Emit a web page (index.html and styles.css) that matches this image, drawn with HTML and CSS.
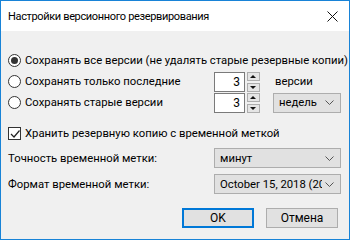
FILE: index.html
```html
<!DOCTYPE html>
<html lang="ru">
<head>
    <meta charset="UTF-8">
    <title>Настройки версионного резервирования</title>
    <link rel="stylesheet" href="styles.css">
</head>
<body>
    <div class="window">
        <div class="titlebar">
            <span class="title">Настройки версионного резервирования</span>
            <span class="close">
                <svg width="11" height="11" viewBox="0 0 11 11"><path d="M0.5 0.5 L10.5 10.5 M10.5 0.5 L0.5 10.5" stroke="#111" stroke-width="1"/></svg>
            </span>
        </div>

        <div class="content">
            <div class="options">
                <div class="row">
                    <span class="radio checked"></span>
                    <span>Сохранять все версии (не удалять старые резервные копии)</span>
                </div>
                <div class="row">
                    <span class="radio"></span>
                    <span class="label">Сохранять только последние</span>
                    <div class="spin">
                        <div class="spin-value">3</div>
                        <div class="spin-buttons">
                            <span class="arrow up"></span>
                            <span class="arrow down"></span>
                        </div>
                    </div>
                    <span class="unit">версии</span>
                </div>
                <div class="row">
                    <span class="radio"></span>
                    <span class="label">Сохранять старые версии</span>
                    <div class="spin">
                        <div class="spin-value">3</div>
                        <div class="spin-buttons">
                            <span class="arrow up"></span>
                            <span class="arrow down"></span>
                        </div>
                    </div>
                    <div class="combo small">
                        <span>недель</span>
                        <svg class="chevron" width="9" height="5" viewBox="0 0 9 5"><path d="M0.5 0.5 L4.5 4.5 L8.5 0.5" fill="none" stroke="#555" stroke-width="1"/></svg>
                    </div>
                </div>
            </div>

            <div class="row check-row">
                <span class="checkbox">
                    <svg width="10" height="10" viewBox="0 0 10 10"><path d="M1 5 L4 8 L9.5 1.5" fill="none" stroke="#222" stroke-width="1.2"/></svg>
                </span>
                <span>Хранить резервную копию с временной меткой</span>
            </div>

            <div class="field">
                <span class="label">Точность временной метки:</span>
                <div class="combo">
                    <span>минут</span>
                    <svg class="chevron" width="9" height="5" viewBox="0 0 9 5"><path d="M0.5 0.5 L4.5 4.5 L8.5 0.5" fill="none" stroke="#555" stroke-width="1"/></svg>
                </div>
            </div>
            <div class="field second">
                <span class="label">Формат временной метки:</span>
                <div class="combo">
                    <span class="clip">October 15, 2018 (2018-10-15)</span>
                    <svg class="chevron" width="9" height="5" viewBox="0 0 9 5"><path d="M0.5 0.5 L4.5 4.5 L8.5 0.5" fill="none" stroke="#555" stroke-width="1"/></svg>
                </div>
            </div>

            <div class="buttons">
                <button class="btn default">OK</button>
                <button class="btn">Отмена</button>
            </div>
        </div>
    </div>
</body>
</html>
```

FILE: styles.css
```css
* {
    box-sizing: border-box;
}

body {
    margin: 0;
    font-family: Roboto, "Noto Sans", sans-serif;
    font-size: 11.3px;
    color: #000;
    white-space: nowrap;
}

.window {
    width: 350px;
    height: 240px;
    border: 1px solid #1883d7;
    background-color: #f0f0f0;
    display: flex;
    flex-direction: column;
    overflow: hidden;
}

.titlebar {
    height: 30px;
    background-color: #fff;
    display: flex;
    align-items: center;
    justify-content: space-between;
    padding: 1px 11px 0 7px;
}

.title {
    font-size: 11px;
    letter-spacing: -0.35px;
}

.close {
    display: flex;
}

.content {
    flex: 1;
    padding: 19px 8px 0 7px;
}

.row {
    display: flex;
    align-items: center;
    height: 21px;
}

.radio {
    width: 13px;
    height: 13px;
    border: 1px solid #333;
    border-radius: 50%;
    background-color: #fff;
    margin-right: 4px;
    position: relative;
    flex-shrink: 0;
}

.radio.checked::after {
    content: "";
    position: absolute;
    left: 2px;
    top: 2px;
    width: 7px;
    height: 7px;
    border-radius: 50%;
    background-color: #333;
}

.label {
    width: 189px;
}

.field .label {
    width: 206px;
}

.spin {
    display: flex;
    align-items: center;
    margin-right: 13px;
}

.spin-value {
    width: 31px;
    height: 20px;
    border: 1px solid #7a7a7a;
    background-color: #fff;
    text-align: right;
    padding-right: 4px;
    line-height: 18px;
    font-size: 12px;
}

.spin-buttons {
    display: flex;
    flex-direction: column;
    justify-content: space-between;
    width: 13px;
    height: 20px;
    margin-left: 2px;
}

.arrow {
    height: 9px;
    background-color: #e5e5e5;
    border: 1px solid #adadad;
    position: relative;
}

.arrow::after {
    content: "";
    position: absolute;
    left: 2px;
    border-left: 3.5px solid transparent;
    border-right: 3.5px solid transparent;
}

.arrow.up::after {
    top: 2px;
    border-bottom: 3px solid #111;
}

.arrow.down::after {
    top: 2px;
    border-top: 3px solid #111;
}

.unit {
    margin-left: 2px;
}

.combo {
    width: 127px;
    height: 20px;
    border: 1px solid #adadad;
    background-color: #e1e1e1;
    display: flex;
    align-items: center;
    justify-content: space-between;
    padding: 0 6px 0 5px;
    overflow: hidden;
}

.combo.small {
    width: 68px;
}

.clip {
    overflow: hidden;
    width: 102px;
}

.chevron {
    flex-shrink: 0;
}

.check-row {
    margin-top: 10px;
}

.checkbox {
    width: 13px;
    height: 13px;
    border: 1px solid #333;
    background-color: #fff;
    margin-right: 4px;
    display: flex;
    align-items: center;
    justify-content: center;
}

.field {
    display: flex;
    align-items: center;
    height: 20px;
    margin-top: 4px;
}

.field.second {
    margin-top: 6px;
}

.buttons {
    display: flex;
    justify-content: flex-end;
    gap: 12px;
    margin-top: 14px;
    padding-right: 3px;
}

.btn {
    width: 72px;
    height: 20px;
    font-family: inherit;
    font-size: 12px;
    background-color: #e1e1e1;
    border: 1px solid #adadad;
    padding: 0;
}

.btn.default {
    border: 2px solid #0078d7;
}
```
